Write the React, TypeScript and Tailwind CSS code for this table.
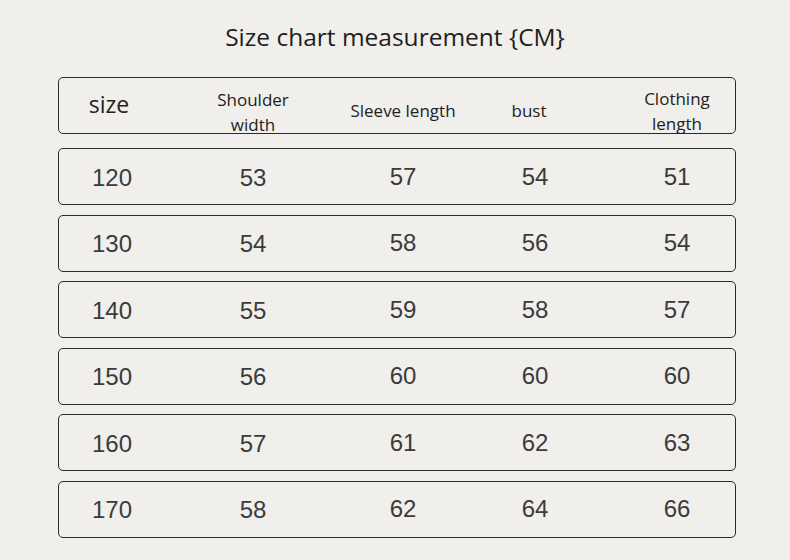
import React from 'react';

const rows = [
  ['120', '53', '57', '54', '51'],
  ['130', '54', '58', '56', '54'],
  ['140', '55', '59', '58', '57'],
  ['150', '56', '60', '60', '60'],
  ['160', '57', '61', '62', '63'],
  ['170', '58', '62', '64', '66'],
];

const cols = 'grid grid-cols-[106px_176px_124px_140px_1fr] items-center h-full';

const App: React.FC = () => {
  return (
    <div className="w-[790px] h-[560px] bg-[#f0efeb] overflow-hidden">
      <h1 className="pt-[20px] h-[54px] leading-[34px] text-center text-[24.5px] text-[#1e1e1e] font-['Open_Sans',sans-serif]">
        Size chart measurement {'{CM}'}
      </h1>

      <div className="mx-[58px] mt-[23px] w-[678px]">
        <div className="h-[57px] border border-[#2a2a2a] rounded-[5px] font-['Open_Sans',sans-serif] text-[#222] text-[17px] leading-[25px]">
          <div className={cols}>
            <div className="text-center text-[23px] -translate-x-[3px] -translate-y-[1px]">size</div>
            <div className="text-center translate-y-[6px]">
              Shoulder
              <br />
              width
            </div>
            <div className="text-center translate-y-[5px]">Sleeve length</div>
            <div className="text-center translate-y-[5px] -translate-x-[6px]">bust</div>
            <div className="text-center pl-[14px] translate-y-[5px]">
              Clothing
              <br />
              length
            </div>
          </div>
        </div>

        <div className="mt-[14px] flex flex-col gap-[9.5px]">
          {rows.map((r) => (
            <div
              key={r[0]}
              className="h-[57px] border border-[#2a2a2a] rounded-[5px] font-['Liberation_Sans',Arial,sans-serif] text-[24px] text-[#3b3b3b]"
            >
              <div className={cols}>
                <div className="text-center translate-y-[1px]">{r[0]}</div>
                <div className="text-center translate-y-[1px]">{r[1]}</div>
                <div className="text-center">{r[2]}</div>
                <div className="text-center">{r[3]}</div>
                <div className="text-center pl-[14px]">{r[4]}</div>
              </div>
            </div>
          ))}
        </div>
      </div>
    </div>
  );
};

export default App;
